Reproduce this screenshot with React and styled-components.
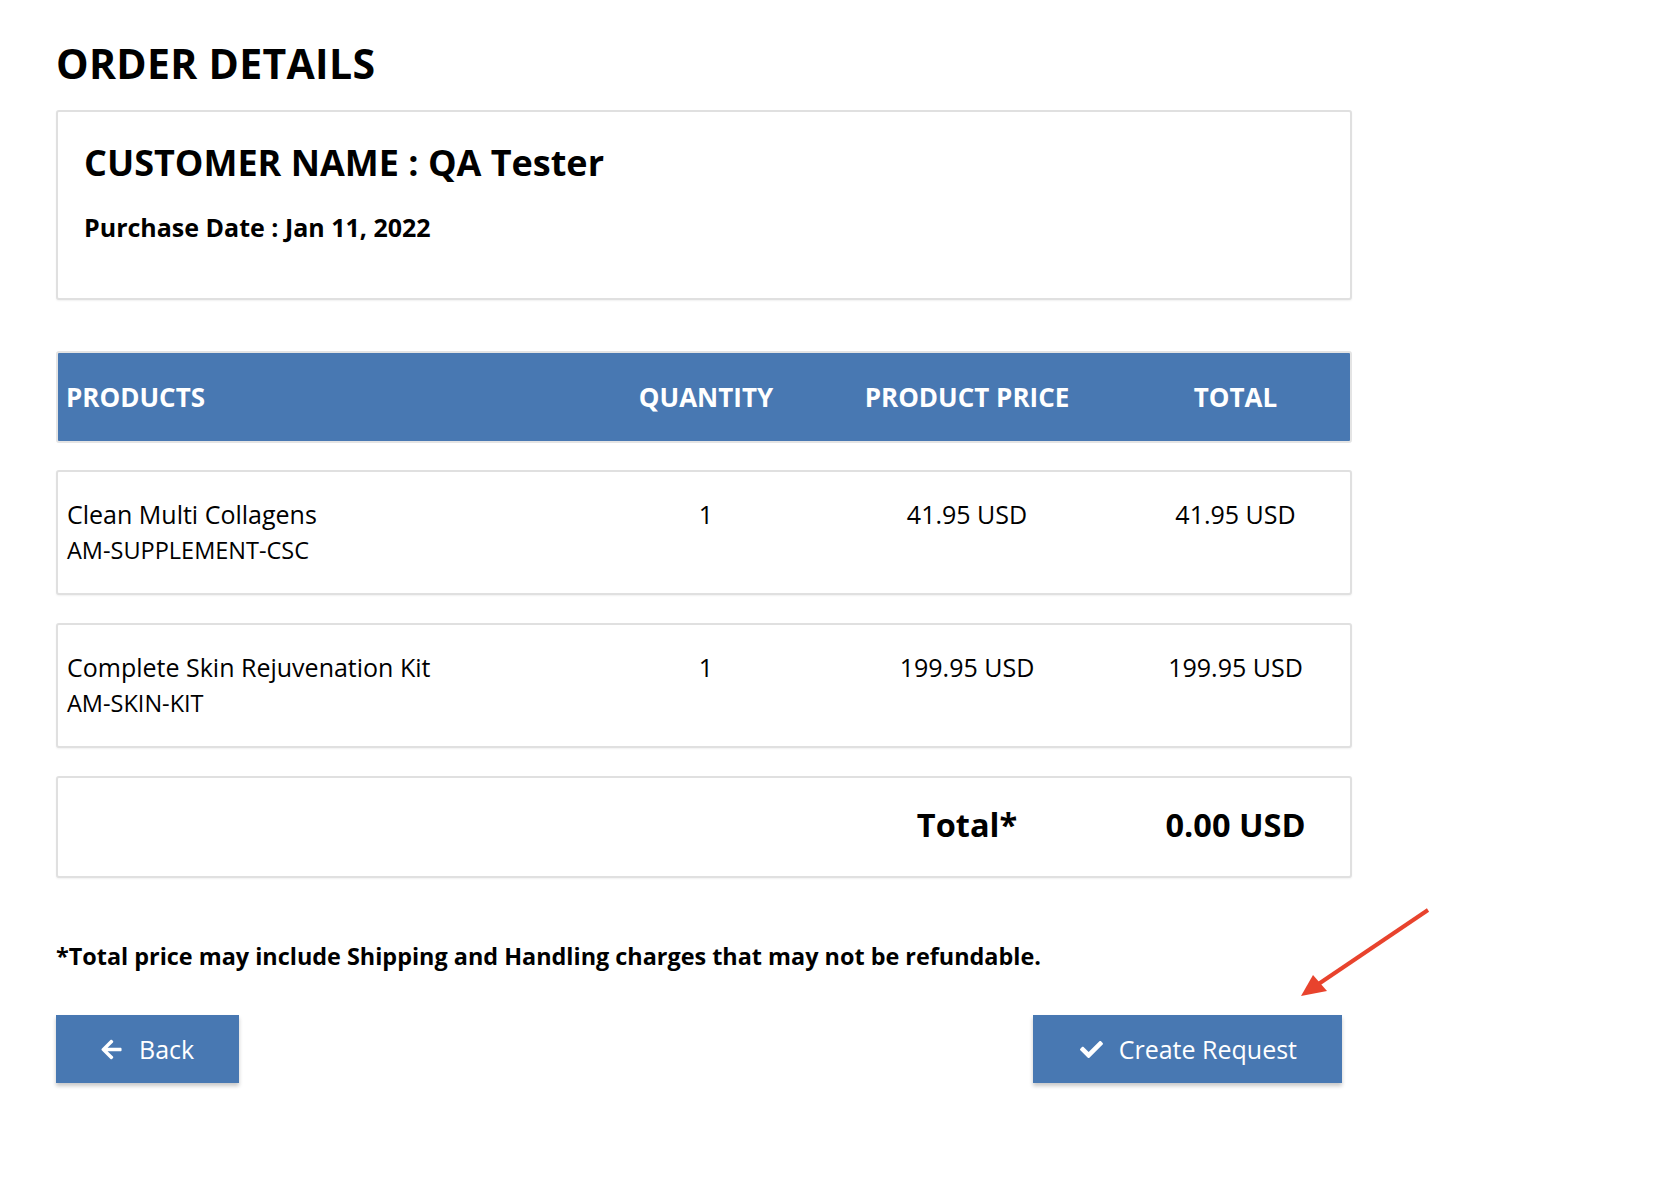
import React from 'react';
import styled, { createGlobalStyle } from 'styled-components';
import { FaArrowLeft, FaCheck } from 'react-icons/fa';

const GlobalStyle = createGlobalStyle`
  html, body {
    margin: 0;
    padding: 0;
    background: #fff;
  }
  body {
    font-family: 'Open Sans', 'Noto Sans', Arial, sans-serif;
    color: #000;
  }
`;

const Page = styled.div`
  position: relative;
  width: 1680px;
  min-height: 1180px;
  padding: 36px 0 0 56px;
  box-sizing: border-box;
`;

const Content = styled.div`
  width: 1296px;
  display: flex;
  flex-direction: column;
`;

const Title = styled.h1`
  margin: 0 0 20px;
  font-size: 41px;
  font-weight: 700;
  line-height: 54px;
  letter-spacing: 0.3px;
`;

const Card = styled.div`
  border: 2px solid #e0e0e0;
  border-radius: 3px;
  box-shadow: 0 1px 2px rgba(0, 0, 0, 0.06);
  background: #fff;
`;

const CustomerCard = styled(Card)`
  height: 190px;
  box-sizing: border-box;
  padding: 26px 26px;
  margin-bottom: 51px;
`;

const CustomerName = styled.h2`
  margin: 0 0 22px;
  font-size: 36px;
  font-weight: 700;
  line-height: 50px;
`;

const PurchaseDate = styled.div`
  font-size: 25px;
  font-weight: 700;
  line-height: 34px;
`;

const Row = styled.div`
  display: grid;
  grid-template-columns: 541px 214px 308px 1fr;
  align-items: ${(p) => (p.$center ? 'center' : 'start')};
`;

const HeaderRow = styled(Row)`
  height: 92px;
  box-sizing: border-box;
  background: #4878b2;
  border: 2px solid #e4e4e4;
  border-radius: 3px;
  color: #fff;
  font-size: 26px;
  font-weight: 700;
  margin-bottom: 27px;
`;

const HeadCell = styled.div`
  text-align: ${(p) => (p.$left ? 'left' : 'center')};
  padding-left: ${(p) => (p.$left ? '8px' : '0')};
`;

const ItemCard = styled(Card)`
  height: 125px;
  box-sizing: border-box;
  padding: 24px 0 0;
  margin-bottom: 28px;
`;

const Cell = styled.div`
  text-align: ${(p) => (p.$left ? 'left' : 'center')};
  padding-left: ${(p) => (p.$left ? '9px' : '0')};
  font-size: 25px;
  line-height: 36px;
`;

const Sku = styled.div`
  font-size: 23.5px;
  line-height: 36px;
`;

const TotalCard = styled(Card)`
  height: 102px;
  box-sizing: border-box;
  display: flex;
  flex-direction: column;
  justify-content: center;
  padding-bottom: 6px;
  margin-bottom: 56px;
`;

const TotalCell = styled.div`
  text-align: center;
  font-size: 32.5px;
  font-weight: 700;
`;

const Note = styled.p`
  margin: 6px 0 43px;
  font-size: 23.4px;
  font-weight: 700;
  line-height: 32px;
`;

const Actions = styled.div`
  display: flex;
  justify-content: space-between;
  padding-right: 10px;
`;

const Button = styled.button`
  display: inline-flex;
  align-items: center;
  gap: 16px;
  height: 68px;
  padding: 0 45px 0 ${(p) => (p.$wide ? '47px' : '44px')};
  border: none;
  border-radius: 0;
  background: #4878b2;
  color: #fff;
  font-family: inherit;
  font-size: 25px;
  box-shadow: 0 3px 4px rgba(0, 0, 0, 0.22);
  cursor: pointer;

  svg {
    font-size: 23px;
  }
`;

const Pointer = styled.svg`
  position: absolute;
  left: 1285px;
  top: 895px;
  pointer-events: none;
`;

const items = [
  { name: 'Clean Multi Collagens', sku: 'AM-SUPPLEMENT-CSC', qty: 1, price: '41.95 USD', total: '41.95 USD' },
  { name: 'Complete Skin Rejuvenation Kit', sku: 'AM-SKIN-KIT', qty: 1, price: '199.95 USD', total: '199.95 USD' },
];

const App = () => (
  <Page>
    <GlobalStyle />
    <Content>
      <Title>ORDER DETAILS</Title>
      <CustomerCard>
        <CustomerName>CUSTOMER NAME : QA Tester</CustomerName>
        <PurchaseDate>Purchase Date : Jan 11, 2022</PurchaseDate>
      </CustomerCard>

      <HeaderRow $center>
        <HeadCell $left>PRODUCTS</HeadCell>
        <HeadCell>QUANTITY</HeadCell>
        <HeadCell>PRODUCT PRICE</HeadCell>
        <HeadCell>TOTAL</HeadCell>
      </HeaderRow>

      {items.map((item) => (
        <ItemCard key={item.sku}>
          <Row>
            <Cell $left>
              {item.name}
              <Sku>{item.sku}</Sku>
            </Cell>
            <Cell>{item.qty}</Cell>
            <Cell>{item.price}</Cell>
            <Cell>{item.total}</Cell>
          </Row>
        </ItemCard>
      ))}

      <TotalCard>
        <Row $center>
          <div />
          <div />
          <TotalCell>Total*</TotalCell>
          <TotalCell>0.00 USD</TotalCell>
        </Row>
      </TotalCard>

      <Note>*Total price may include Shipping and Handling charges that may not be refundable.</Note>

      <Actions>
        <Button>
          <FaArrowLeft />
          Back
        </Button>
        <Button $wide>
          <FaCheck />
          Create Request
        </Button>
      </Actions>
    </Content>

    <Pointer width="160" height="120" viewBox="0 0 160 120">
      <line x1="143" y1="15" x2="32" y2="90" stroke="#e8432d" strokeWidth="4" />
      <polygon points="16,101 28,80 42,96" fill="#e8432d" />
    </Pointer>
  </Page>
);

export default App;
